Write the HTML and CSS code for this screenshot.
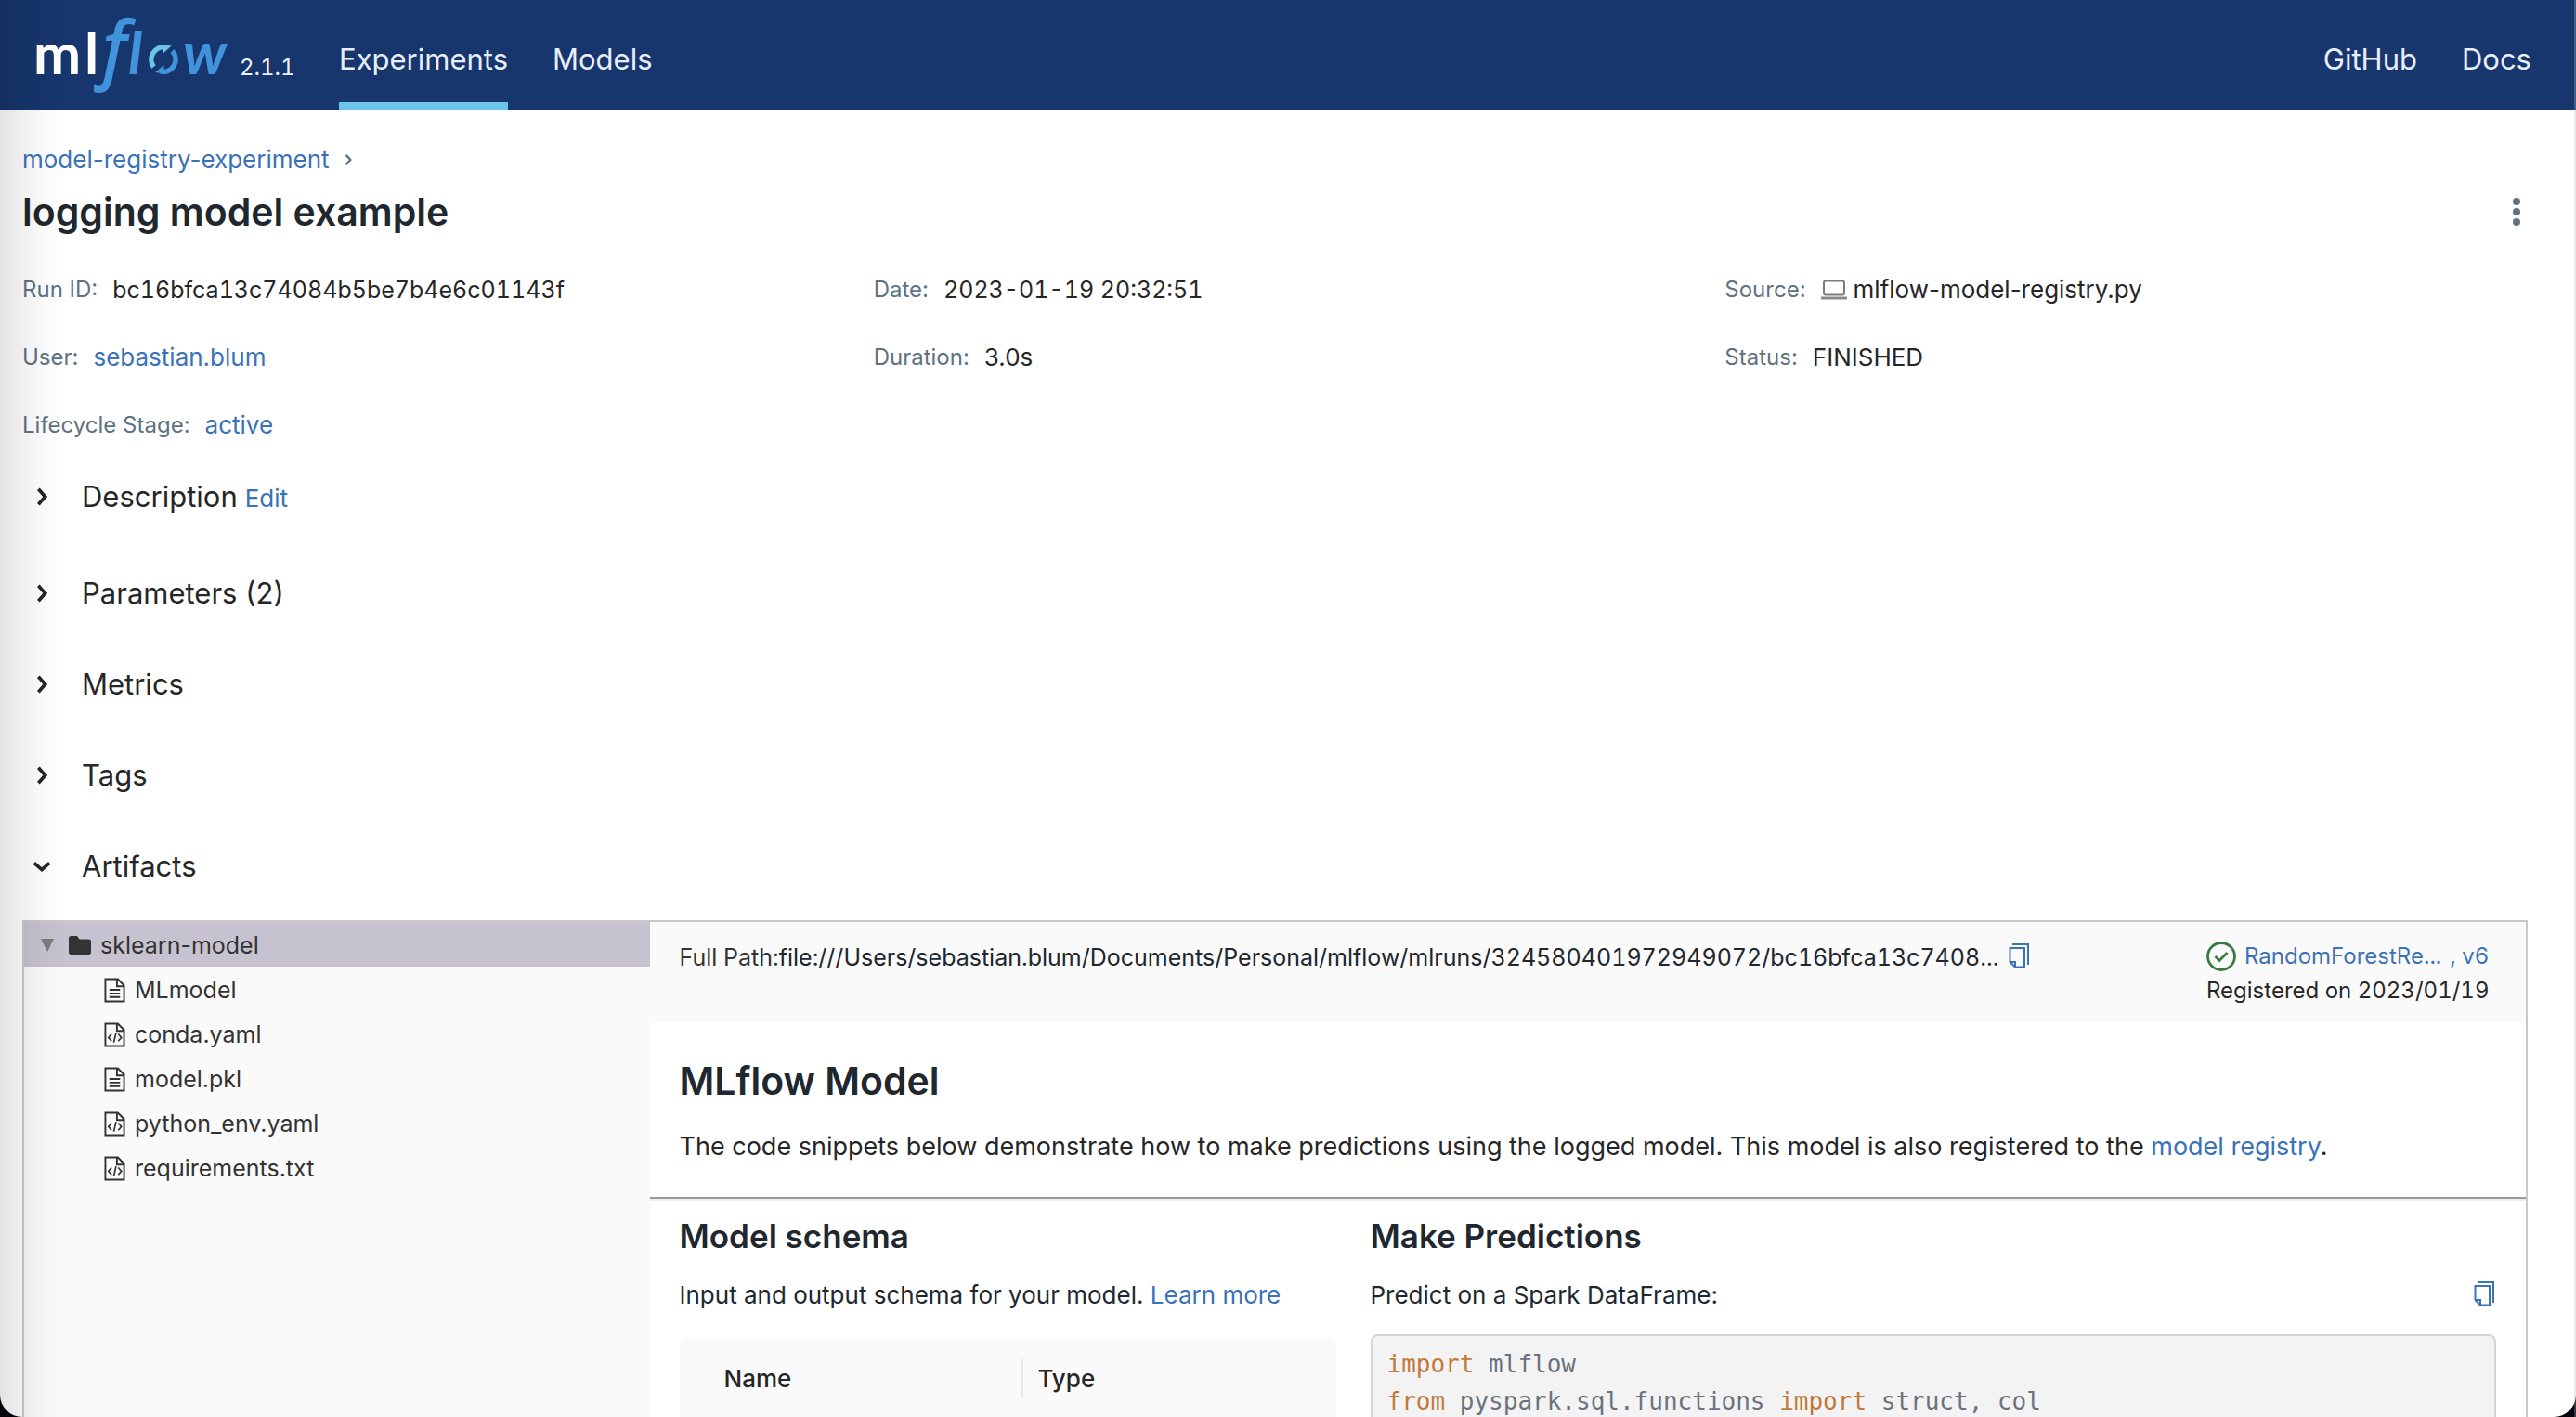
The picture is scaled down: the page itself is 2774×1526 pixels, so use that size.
FILE: index.html
```html
<!DOCTYPE html>
<html lang="en">
<head>
<meta charset="utf-8">
<title>logging model example - MLflow Run</title>
<link rel="stylesheet" href="styles.css">
</head>
<body>
<svg class="sprite" aria-hidden="true">
  <symbol id="chevron-right" viewBox="0 0 24 24"><path d="M8 3l8 9-8 9" fill="none" stroke="currentColor" stroke-width="4"/></symbol>
  <symbol id="chevron-down" viewBox="0 0 24 24"><path d="M3 8l9 8 9-8" fill="none" stroke="currentColor" stroke-width="4"/></symbol>
  <symbol id="file-text" viewBox="0 0 24 28"><path d="M1.500 1.500h14l7 7v18h-21zM14.500 1.500v8h8M6 13.500h12M6 17.500h12M6 21.500h12" fill="none" stroke="currentColor" stroke-width="2"/></symbol>
  <symbol id="file-code" viewBox="0 0 24 28"><path d="M1.500 1.500h14l7 7v18h-21zM14.500 1.500v8h8" fill="none" stroke="currentColor" stroke-width="2"/><path d="M8.500 13l-3.500 4 3.500 4M16 13l3.500 4-3.500 4M13.500 11.500l-2.500 11" fill="none" stroke="currentColor" stroke-width="1.800"/></symbol>
  <symbol id="copy" viewBox="0 0 22 27"><path d="M4 1h17v22" fill="none" stroke="currentColor" stroke-width="2"/><path d="M1.500 5h15.500v20.500H7L1.500 20z" fill="none" stroke="currentColor" stroke-width="2"/><path d="M1.500 20h5.500v5.500" fill="none" stroke="currentColor" stroke-width="2"/></symbol>
</svg>

<div class="app">
  <header class="topbar">
    <a class="brand" href="#" aria-label="mlflow home">
      <svg class="logo" viewBox="0 0 216 92">
        <text class="logo-ml" x="0" y="70">m</text>
        <text class="logo-ml" x="55" y="70">l</text>
        <text class="logo-f" x="75" y="70">f</text>
        <text class="logo-low" x="102" y="70">l</text>
        <text class="logo-low" x="161" y="70">w</text>
        <path d="M129.500 62A13.200 13.200 0 0 1 142 41" fill="none" stroke="#6ac5e8" stroke-width="5.500"/>
        <path d="M148.500 39.500l-8.800 8v-9.500z" fill="#6ac5e8"/>
        <path d="M149.500 45A13.200 13.200 0 0 1 137 67" fill="none" stroke="#4193dc" stroke-width="5.500"/>
        <path d="M131 68l9.500-8v9.500z" fill="#4193dc"/>
      </svg>
      <span class="version">2.1.1</span>
    </a>
    <nav class="nav">
      <a class="nav-link active" href="#">Experiments</a>
      <a class="nav-link" href="#">Models</a>
    </nav>
    <nav class="nav nav-right">
      <a class="nav-link" href="#">GitHub</a>
      <a class="nav-link" href="#">Docs</a>
    </nav>
  </header>

  <main class="page">
    <div class="breadcrumb">
      <a href="#">model-registry-experiment</a>
      <svg class="crumb-sep" aria-hidden="true"><use href="#chevron-right"/></svg>
    </div>
    <div class="title-row">
      <h1>logging model example</h1>
      <button class="kebab" aria-label="More actions">
        <svg viewBox="0 0 8 30"><g fill="currentColor"><circle cx="4" cy="4" r="4"/><circle cx="4" cy="15" r="4"/><circle cx="4" cy="26" r="4"/></g></svg>
      </button>
    </div>

    <dl class="details">
      <div><dt>Run ID:</dt><dd class="digits">bc16bfca13c74084b5be7b4e6c01143f</dd></div>
      <div><dt>Date:</dt><dd class="digits">2023-01-19 20:32:51</dd></div>
      <div><dt>Source:</dt><dd class="source"><svg viewBox="0 0 28 22" aria-hidden="true"><rect x="3" y="1.500" width="22" height="15" rx="2" fill="none" stroke="#7b7b7b" stroke-width="2"/><path d="M0 18.500h28v3H0z" fill="#8a8a8a"/></svg>mlflow-model-registry.py</dd></div>
      <div><dt>User:</dt><dd><a href="#">sebastian.blum</a></dd></div>
      <div><dt>Duration:</dt><dd>3.0s</dd></div>
      <div><dt>Status:</dt><dd>FINISHED</dd></div>
      <div><dt>Lifecycle Stage:</dt><dd><a href="#">active</a></dd></div>
    </dl>

    <div class="sections">
      <div class="section section-description">
        <button class="toggle"><svg aria-hidden="true"><use href="#chevron-right"/></svg><span>Description</span></button>
        <a class="edit" href="#">Edit</a>
      </div>
      <div class="section"><button class="toggle"><svg aria-hidden="true"><use href="#chevron-right"/></svg>Parameters (2)</button></div>
      <div class="section"><button class="toggle"><svg aria-hidden="true"><use href="#chevron-right"/></svg>Metrics</button></div>
      <div class="section"><button class="toggle"><svg aria-hidden="true"><use href="#chevron-right"/></svg>Tags</button></div>
      <div class="section"><button class="toggle" aria-expanded="true"><svg aria-hidden="true"><use href="#chevron-down"/></svg>Artifacts</button></div>
    </div>

    <div class="artifacts">
      <aside class="tree">
        <button class="node root"><svg class="caret" viewBox="0 0 14 14" aria-hidden="true"><path d="M0 0h14l-7 14z" fill="#7d7b80"/></svg><svg class="folder" viewBox="0 0 24 20" aria-hidden="true"><path d="M2.500 0h6.500l2.500 3.500h10A2.500 2.500 0 0 1 24 6v11.500a2.500 2.500 0 0 1-2.500 2.500h-19A2.500 2.500 0 0 1 0 17.500v-15A2.500 2.500 0 0 1 2.500 0z" fill="currentColor"/></svg>sklearn-model</button>
        <button class="node"><svg class="file" aria-hidden="true"><use href="#file-text"/></svg>MLmodel</button>
        <button class="node"><svg class="file" aria-hidden="true"><use href="#file-code"/></svg>conda.yaml</button>
        <button class="node"><svg class="file" aria-hidden="true"><use href="#file-text"/></svg>model.pkl</button>
        <button class="node"><svg class="file" aria-hidden="true"><use href="#file-code"/></svg>python_env.yaml</button>
        <button class="node"><svg class="file" aria-hidden="true"><use href="#file-code"/></svg>requirements.txt</button>
      </aside>

      <div class="viewer">
        <div class="pathbar">
          <div class="fullpath">
            <span class="digits"><span class="path-label">Full Path:</span>file:///Users/sebastian.blum/Documents/Personal/mlflow/mlruns/324580401972949072/bc16bfca13c7408...</span>
            <button class="copy" aria-label="Copy path"><svg><use href="#copy"/></svg></button>
          </div>
          <div class="registered">
            <div class="version-line">
              <svg viewBox="0 0 32 32" aria-hidden="true"><circle cx="16" cy="16" r="14.500" fill="none" stroke="#3c7a45" stroke-width="2.800"/><path d="M9.500 16l4.500 4.500 8.500-8.500" fill="none" stroke="#3c7a45" stroke-width="2.800"/></svg>
              <a href="#">RandomForestRe...</a>
              <a href="#">, v6</a>
            </div>
            <div>Registered on 2023/01/19</div>
          </div>
        </div>

        <div class="intro">
          <h2>MLflow Model</h2>
          <p>The code snippets below demonstrate how to make predictions using the logged model. This model is also registered to the <a href="#">model registry</a>.</p>
        </div>
        <hr>

        <div class="columns">
          <section class="schema">
            <h3>Model schema</h3>
            <p>Input and output schema for your model. <a href="#">Learn more</a></p>
            <table>
              <thead><tr><th scope="col" class="name">Name</th><th scope="col"><span>Type</span></th></tr></thead>
            </table>
          </section>
          <section class="predict">
            <h3>Make Predictions</h3>
            <div class="predict-head">
              <p>Predict on a Spark DataFrame:</p>
              <button class="copy" aria-label="Copy code"><svg><use href="#copy"/></svg></button>
            </div>
<pre><code><b>import</b> mlflow
<b>from</b> pyspark.sql.functions <b>import</b> struct, col
</code></pre>
          </section>
        </div>
      </div>
    </div>
  </main>
</div>
</body>
</html>
```
FILE: styles.css
```css
* { box-sizing: border-box; }

body {
  margin: 0;
  background: #05040c;
  color: #262626;
  font: 26px/40px Inter, "Liberation Sans", sans-serif;
}

h1, h2, h3, p, dl, dd, pre { margin: 0; }
h1, h2, h3 { color: #20272e; font-weight: 600; }
a { color: #3a72b8; text-decoration: none; }
button {
  padding: 0;
  border: 0;
  background: none;
  color: inherit;
  font: inherit;
  cursor: pointer;
}
svg { flex: none; }
.sprite { position: absolute; width: 0; height: 0; }
.digits { font-size: 25px; font-variant-numeric: tabular-nums; }

.app {
  height: 100vh;
  overflow: hidden;
  border-radius: 0 0 24px 24px;
  background: #fff;
}

/* Window edge: soft shade on the left, thin highlight on the right */
.app::after {
  content: "";
  position: fixed;
  inset: 0;
  border-right: 2px solid rgba(255, 255, 255, 0.22);
  background: linear-gradient(to right, rgba(0, 0, 0, 0.11), rgba(0, 0, 0, 0.06) 24px, rgba(0, 0, 0, 0.02) 48px, transparent 72px);
  pointer-events: none;
}

/* Top bar */
.topbar {
  display: flex;
  height: 118px;
  padding: 0 48px 0 36px;
  background: #17366e;
}
.brand { display: flex; padding-top: 10px; color: #edf3fc; }
.logo { width: 216px; height: 92px; overflow: visible; }
.logo-ml { fill: #fff; font: 700 61px Lato, sans-serif; }
.logo-f { fill: #4193dc; stroke: #4193dc; stroke-width: 2px; font: italic 78px "Open Sans", sans-serif; }
.logo-low { fill: #4193dc; font: italic 700 64px Lato, sans-serif; }
.version { width: 113px; padding: 43px 0 0 6px; font-size: 24px; font-variant-numeric: tabular-nums; }
.nav { display: flex; gap: 48px; }
.nav-right { margin-left: auto; }
.nav-link {
  padding-top: 44px;
  border-bottom: 8px solid transparent;
  color: #e8eefa;
  font-size: 31px;
}
.nav-link.active { border-color: #6ac5e8; }

/* Run heading */
.page { padding: 34px 0 0 24px; }
.breadcrumb { display: flex; align-items: center; gap: 12px; }
.crumb-sep { width: 16px; height: 14px; color: #5f7281; }
.title-row {
  display: flex;
  align-items: center;
  justify-content: space-between;
  padding: 8px 60px 0 0;
}
h1 { font-size: 41px; line-height: 56px; }
.kebab { width: 8px; height: 30px; color: #5f7281; }
.kebab svg { display: block; width: 8px; height: 30px; }

.details {
  display: grid;
  grid-template-columns: repeat(3, 1fr);
  row-gap: 33px;
  padding-top: 36px;
}
.details > div { display: flex; gap: 16px; }
dt { color: #5f7281; font-size: 24px; }
.source { display: flex; align-items: center; gap: 7px; }
.source svg { width: 28px; height: 22px; }

/* Collapsible sections */
.sections { display: grid; gap: 58px; padding-top: 37px; }
.section { display: flex; align-items: baseline; gap: 8px; }
.section-description { padding-bottom: 4px; }
.toggle { display: flex; align-items: center; gap: 31px; padding-left: 9px; font-size: 31px; }
.toggle svg { width: 24px; height: 22px; }

/* Artifact browser */
.artifacts {
  display: grid;
  grid-template-columns: 25% 1fr;
  min-height: 900px;
  margin: 38px 52px 0 0;
  border: 2px solid #c9c9c9;
}
.tree { background: #fafafa; color: #333; }
.node {
  display: flex;
  align-items: center;
  gap: 10px;
  width: 100%;
  height: 48px;
  padding: 2px 0 0 86px;
  font-size: 25px;
}
.root { padding-left: 18px; background: #c6c2cf; }
.caret { width: 14px; height: 14px; margin-right: 6px; }
.folder { width: 24px; height: 20px; }
.file { width: 23px; height: 27px; }

.pathbar {
  display: flex;
  justify-content: space-between;
  height: 109px;
  padding: 18px 36px 0 32px;
  background: #fafafa;
}
.fullpath { display: flex; gap: 11px; color: #20272e; }
.path-label { color: #333; }
.copy { width: 22px; height: 36px; color: #3a72b8; }
.copy svg { display: block; width: 22px; height: 27px; }
.registered { width: 308px; font-size: 24px; line-height: 37px; font-variant-numeric: tabular-nums; }
.version-line { display: flex; align-items: center; gap: 9px; }
.version-line svg { width: 32px; height: 32px; }

.intro { padding: 34px 32px 34px; }
h2 { font-size: 41px; line-height: 56px; }
.intro p { padding-top: 23px; font-size: 27px; }
hr {
  height: 4px;
  margin: 0;
  border: solid;
  border-width: 2px 0;
  border-color: #9a9a9a transparent #ededed;
}

.columns {
  display: grid;
  grid-template-columns: 707px 1fr;
  gap: 37px;
  padding: 14px 32px 0;
  color: #20272e;
}
h3 { font-size: 35px; line-height: 48px; }
.schema p, .predict-head { padding-top: 20px; }
.predict-head { display: flex; justify-content: space-between; padding-right: 2px; }
table {
  width: 100%;
  margin-top: 26px;
  border-spacing: 0;
  border-radius: 8px 8px 0 0;
  background: #fafafa;
  color: #262626;
}
th { padding: 23px 0; text-align: left; font-weight: 500; line-height: 42px; }
th.name { width: 368px; padding-left: 48px; }
th span { display: block; padding-left: 16px; border-left: 2px solid #e8e8e8; }
pre {
  height: 400px;
  margin-top: 22px;
  padding: 10px 16px;
  border: 2px solid #d4d4d4;
  border-radius: 8px;
  background: #f3f3f3;
  color: #6a737d;
}
code { font: 26px/40px "DejaVu Sans Mono", monospace; }
code b { color: #c27a3b; font-weight: 400; }
```
